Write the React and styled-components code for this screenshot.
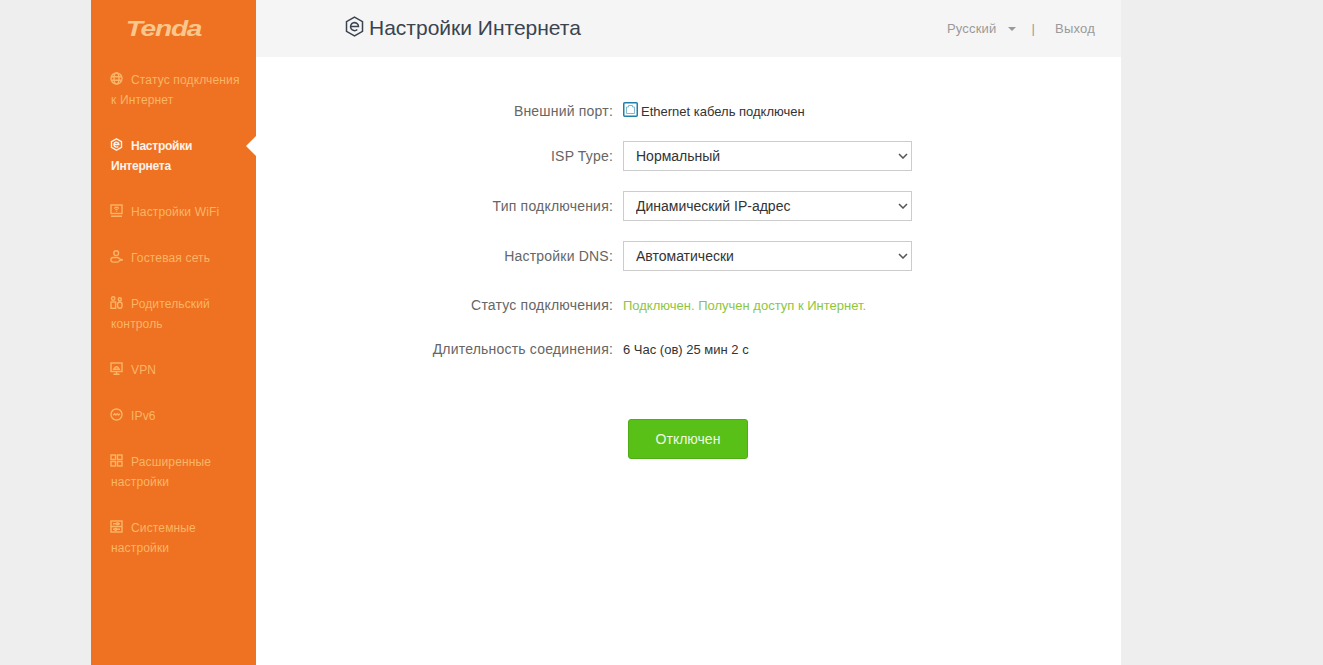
import React from 'react';
import styled, { createGlobalStyle } from 'styled-components';

const GlobalStyle = createGlobalStyle`
  html, body {
    margin: 0;
    padding: 0;
    height: 100%;
    background: #eeeeee;
    font-family: "Liberation Sans", Arial, sans-serif;
    overflow: hidden;
  }
`;

const Page = styled.div`
  display: flex;
  width: 1030px;
  height: 665px;
  margin-left: 91px;
  background: #fff;
`;

const Sidebar = styled.aside`
  width: 165px;
  flex-shrink: 0;
  background: #ee7221;
`;

const LogoBox = styled.div`
  height: 57px;
  display: flex;
  justify-content: center;
  align-items: center;
  padding-right: 21px;
  box-sizing: border-box;
`;

const Logo = styled.span`
  font-style: italic;
  font-weight: bold;
  font-size: 22px;
  letter-spacing: -1px;
  color: #f9c68c;
  transform: scaleX(1.28);
`;

const Nav = styled.nav`
  display: flex;
  flex-direction: column;
`;

const NavItem = styled.a`
  position: relative;
  display: block;
  padding: 13px 10px 13px 20px;
  font-size: 12px;
  line-height: 20px;
  letter-spacing: ${(p) => (p.$active ? '-0.25px' : '0.15px')};
  font-weight: ${(p) => (p.$active ? 'bold' : 'normal')};
  color: ${(p) => (p.$active ? '#fdf3ea' : '#fab566')};

  ${(p) =>
    p.$active &&
    `&::after {
      content: '';
      position: absolute;
      right: 0;
      top: 13px;
      border: 10px solid transparent;
      border-right-color: #fff;
      border-left-width: 0;
    }`}
`;

const NavIcon = styled.svg`
  width: 13px;
  height: 13px;
  margin: 0 8px 0 -1px;
  vertical-align: -1px;
  fill: none;
  stroke: currentColor;
  stroke-width: 1.4;
`;

const Main = styled.main`
  flex: 1;
  display: flex;
  flex-direction: column;
`;

const Header = styled.header`
  height: 57px;
  background: #f5f5f5;
  display: flex;
  align-items: center;
  justify-content: space-between;
  padding: 0 26px 0 89px;
`;

const Title = styled.h1`
  margin: 0 0 2px;
  display: flex;
  align-items: center;
  gap: 5px;
  font-size: 21px;
  font-weight: normal;
  color: #3a4450;
`;

const TitleIcon = styled.svg`
  width: 19px;
  height: 21px;
  margin-top: -3px;
  fill: none;
  stroke: #3a4450;
  stroke-width: 1.5;
`;

const HeaderLinks = styled.div`
  display: flex;
  align-items: center;
  font-size: 13px;
  letter-spacing: 0.2px;
  color: #9a9a9a;
`;

const Caret = styled.span`
  margin-left: 11px;
  border: 4px solid transparent;
  border-top: 4px solid #9a9a9a;
  border-bottom-width: 0;
`;

const Divider = styled.span`
  margin: 0 20px 0 16px;
`;

const Content = styled.div`
  display: flex;
  flex-direction: column;
  padding-top: 44px;
`;

const Row = styled.div`
  display: grid;
  grid-template-columns: 357px 1fr;
  column-gap: 10px;
  align-items: center;
  min-height: ${(p) => p.$h || 30}px;
  margin-bottom: ${(p) => (p.$mb === undefined ? 20 : p.$mb)}px;
`;

const Label = styled.label`
  text-align: right;
  font-size: 14px;
  letter-spacing: 0.2px;
  color: #666;
`;

const Value = styled.div`
  display: flex;
  align-items: center;
  font-size: 13px;
  color: ${(p) => p.$color || '#333'};
`;

const PortIcon = styled.svg`
  width: 15px;
  height: 15px;
  margin: -3px 3px 0 0;
  fill: none;
`;

const SelectWrap = styled.div`
  position: relative;
  width: 289px;
  height: 30px;
`;

const Select = styled.select`
  appearance: none;
  width: 100%;
  height: 100%;
  padding: 0 0 0 12px;
  background: #fff;
  border: 1px solid #ccc;
  border-radius: 0;
  outline: none;
  font-family: inherit;
  font-size: 14px;
  color: #333;
`;

const Chevron = styled.svg`
  position: absolute;
  right: 4px;
  top: 12px;
  width: 10px;
  height: 6px;
  fill: none;
  stroke: #555;
  stroke-width: 1.5;
  pointer-events: none;
`;

const ButtonRow = styled.div`
  display: flex;
  padding-left: 372px;
  margin-top: 55px;
`;

const Button = styled.button`
  width: 120px;
  height: 40px;
  border: 1px solid #4fae16;
  border-radius: 3px;
  background: #58c016;
  color: #eef8e4;
  font-family: inherit;
  font-size: 14px;
`;

const icons = {
  globe: (
    <>
      <circle cx="6.5" cy="6.5" r="5.5" />
      <ellipse cx="6.5" cy="6.5" rx="2.5" ry="5.5" />
      <path d="M1.2 4.7h10.6M1.2 8.3h10.6" />
    </>
  ),
  hex: (
    <>
      <path d="M6.5 .8l5 2.8v5.8l-5 2.8-5-2.8V3.6z" />
      <path d="M3.9 6.5h5a2.5 2.5 0 1 0-.7 1.9" />
    </>
  ),
  wifi: (
    <>
      <rect x="1" y="1" width="11" height="8.5" />
      <path d="M1 12.2h11M4.3 4.4a3.2 3.2 0 0 1 4.4 0M5.5 5.9a1.5 1.5 0 0 1 2 0M6.5 7v.8" />
    </>
  ),
  guest: (
    <>
      <circle cx="6.2" cy="3.2" r="2.4" />
      <path d="M7.5 7.5H3.2a2.3 2.3 0 0 0 0 4.6h4.3c1 0 1.5-.8 2-1.400l3-.9-3-.9c-.5-.6-1-1.400-2-1.400z" />
    </>
  ),
  parent: (
    <>
      <circle cx="3.2" cy="2.5" r="1.7" />
      <rect x="1" y="6" width="4.6" height="6.3" />
      <circle cx="9.8" cy="3.2" r="1.5" />
      <rect x="7.6" y="6" width="4.4" height="6.3" rx="2.2" />
    </>
  ),
  vpn: (
    <>
      <rect x="1" y="1" width="11" height="8.5" />
      <path d="M6.5 9.5V12M3.5 12.3h6M3.8 7.3h5.4L8 5.5a1.8 1.8 0 0 0-3 0z" />
    </>
  ),
  ipv6: (
    <>
      <circle cx="6.5" cy="6.5" r="5.5" />
      <path d="M3.300 7.200l1.300-1.400 1.300 1.200 1.300-1.200 1.300 1.200 1.300-1.200" />
    </>
  ),
  grid: (
    <>
      <rect x="1" y="1" width="4.5" height="4.5" />
      <rect x="7.5" y="1" width="4.5" height="4.5" />
      <rect x="1" y="7.5" width="4.5" height="4.5" />
      <rect x="7.5" y="7.5" width="4.5" height="4.5" />
    </>
  ),
  system: (
    <>
      <rect x="1" y="1" width="11" height="11" />
      <path d="M1 6.5h11M3 3.8h3.5M8.5 3.8h1.5M3 9.2h1.5M7 9.2h3" />
      <circle cx="7.5" cy="3.8" r="1" />
      <circle cx="5.7" cy="9.2" r="1" />
    </>
  ),
};

const menu = [
  { icon: 'globe', text: 'Статус подклчения к Интернет' },
  { icon: 'hex', text: 'Настройки Интернета', active: true },
  { icon: 'wifi', text: 'Настройки WiFi' },
  { icon: 'guest', text: 'Гостевая сеть' },
  { icon: 'parent', text: 'Родительский контроль' },
  { icon: 'vpn', text: 'VPN' },
  { icon: 'ipv6', text: 'IPv6' },
  { icon: 'grid', text: 'Расширенные настройки' },
  { icon: 'system', text: 'Системные настройки' },
];

function Dropdown({ value, label }) {
  return (
    <SelectWrap>
      <Select defaultValue={value}>
        <option value={value}>{label}</option>
      </Select>
      <Chevron viewBox="0 0 10 6">
        <path d="M1 1l4 4 4-4" />
      </Chevron>
    </SelectWrap>
  );
}

export default function App() {
  return (
    <>
      <GlobalStyle />
      <Page>
        <Sidebar>
          <LogoBox>
            <Logo>Tenda</Logo>
          </LogoBox>
          <Nav>
            {menu.map((item) => (
              <NavItem key={item.icon} $active={item.active}>
                <NavIcon viewBox="0 0 13 13">{icons[item.icon]}</NavIcon>
                {item.text}
              </NavItem>
            ))}
          </Nav>
        </Sidebar>
        <Main>
          <Header>
            <Title>
              <TitleIcon viewBox="0 0 19 21">
                <path d="M9.5 1.2l8 4.5v9.6l-8 4.5-8-4.5V5.7z" />
                <path d="M5.5 10.5h8a4 4 0 1 0-1.2 3" />
              </TitleIcon>
              Настройки Интернета
            </Title>
            <HeaderLinks>
              Русский
              <Caret />
              <Divider>|</Divider>
              Выход
            </HeaderLinks>
          </Header>
          <Content>
            <Row $h={20} $mb={20}>
              <Label>Внешний порт:</Label>
              <Value>
                <PortIcon viewBox="0 0 15 15">
                  <rect x=".75" y=".75" width="13.5" height="13.5" rx="1" stroke="#1f7fa8" strokeWidth="1.5" />
                  <path d="M3.5 11.5V5h2V3.5h4V5h2v6.5z" stroke="#7fb8d0" strokeWidth="1" />
                </PortIcon>
                Ethernet кабель подключен
              </Value>
            </Row>
            <Row>
              <Label>ISP Type:</Label>
              <Dropdown value="normal" label="Нормальный" />
            </Row>
            <Row>
              <Label>Тип подключения:</Label>
              <Dropdown value="dhcp" label="Динамический IP-адрес" />
            </Row>
            <Row $mb={19}>
              <Label>Настройки DNS:</Label>
              <Dropdown value="auto" label="Автоматически" />
            </Row>
            <Row $h={30} $mb={14}>
              <Label>Статус подключения:</Label>
              <Value $color="#8cc63f">Подключен. Получен доступ к Интернет.</Value>
            </Row>
            <Row $h={30} $mb={0}>
              <Label>Длительность соединения:</Label>
              <Value>6 Час (ов) 25 мин 2 с</Value>
            </Row>
            <ButtonRow>
              <Button>Отключен</Button>
            </ButtonRow>
          </Content>
        </Main>
      </Page>
    </>
  );
}
